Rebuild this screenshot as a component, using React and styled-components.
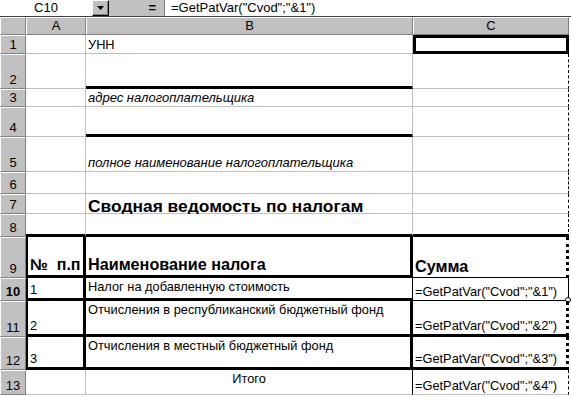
import React from "react";
import styled, { createGlobalStyle } from "styled-components";

const GRID = "1px solid #c0c0c0";
const THICK = "3px solid #000";
const LEFT_THICK = "2px solid #000";
const THIN = "1px solid #000";
const DOTTED = "3px dotted #000";
const PAGE_BREAK = "1px dashed #000";

const GlobalStyle = createGlobalStyle`
  html, body {
    margin: 0;
    padding: 0;
    background: #fff;
  }
  body {
    font-family: "Liberation Sans", Arial, sans-serif;
    font-size: 12px;
    color: #000;
  }
`;

const rowHeights = [19, 35, 18, 30, 35, 22, 20, 23, 41, 23, 36, 33, 25];

const rows = [
  { label: "1", b: { text: "УНН" }, c: { top: THICK, left: THICK, bottom: THICK, right: THICK } },
  { label: "2", b: { bottom: THICK } },
  { label: "3", b: { text: "адрес налогоплательщика", italic: true, size: 13 } },
  { label: "4", b: { bottom: THICK } },
  { label: "5", b: { text: "полное наименование налогоплательщика", italic: true, size: 13 } },
  { label: "6" },
  { label: "7", b: { text: "Сводная ведомость по налогам", bold: true, size: 17.4, lh: "11px" } },
  { label: "8", a: { bottom: THICK }, b: { bottom: THICK }, c: { bottom: THICK } },
  {
    label: "9",
    a: { text: "№  п.п", bold: true, size: 16, left: LEFT_THICK, right: THICK, bottom: THICK },
    b: { text: "Наименование налога", bold: true, size: 16.2, right: THICK, bottom: THICK },
    c: { text: "Сумма", bold: true, size: 16.2, right: DOTTED, bottom: THIN },
  },
  {
    label: "10",
    active: true,
    a: { text: "1", left: LEFT_THICK, right: THICK, bottom: THICK },
    b: { text: "Налог на добавленную стоимость", v: "top", right: THIN, bottom: THICK },
    c: { text: '=GetPatVar("Cvod";"&1")', right: THIN, bottom: THIN, handle: true },
  },
  {
    label: "11",
    a: { text: "2", left: LEFT_THICK, right: THICK, bottom: THICK },
    b: { text: "Отчисления в республиканский бюджетный фонд", v: "top", right: THICK, bottom: THICK },
    c: { text: '=GetPatVar("Cvod";"&2")', right: DOTTED, bottom: THICK },
  },
  {
    label: "12",
    a: { text: "3", left: LEFT_THICK, right: THICK, bottom: THICK },
    b: { text: "Отчисления в местный бюджетный фонд", v: "top", right: THICK, bottom: THICK },
    c: { text: '=GetPatVar("Cvod";"&3")', right: DOTTED, bottom: THICK },
  },
  {
    label: "13",
    b: { text: "Итого", v: "top", h: "center", right: THIN },
    c: { text: '=GetPatVar("Cvod";"&4")' },
  },
];

export default function App() {
  return (
    <>
      <GlobalStyle />
      <Window>
        <FormulaBar>
          <NameBox>C10</NameBox>
          <DropButton>
            <svg width="7" height="4" viewBox="0 0 7 4">
              <path d="M0 0h7L3.5 4z" fill="#000" />
            </svg>
          </DropButton>
          <EqualsZone>=</EqualsZone>
          <FormulaInput>=GetPatVar("Cvod";"&amp;1")</FormulaInput>
        </FormulaBar>
        <Sheet $rows={rowHeights}>
          <HeadCell />
          <HeadCell>A</HeadCell>
          <HeadCell>B</HeadCell>
          <HeadCell>C</HeadCell>
          <Blank />
          {rows.map((row) => (
            <React.Fragment key={row.label}>
              <HeadCell $rowLabel $active={row.active}>
                {row.label}
              </HeadCell>
              {["a", "b", "c"].map((col) => {
                const cell = row[col] || {};
                return (
                  <Cell
                    key={col}
                    $top={cell.top}
                    $left={cell.left}
                    $bottom={cell.bottom}
                    $right={cell.right || (col === "c" ? PAGE_BREAK : undefined)}
                    $v={cell.v}
                    $h={cell.h}
                    $bold={cell.bold}
                    $italic={cell.italic}
                    $size={cell.size}
                    $lh={cell.lh}
                  >
                    {cell.text}
                    {cell.handle && <FillHandle />}
                  </Cell>
                );
              })}
              <Blank />
            </React.Fragment>
          ))}
        </Sheet>
      </Window>
    </>
  );
}

const Window = styled.div`
  width: 571px;
  height: 397px;
  overflow: hidden;
  background: #fff;
`;

const FormulaBar = styled.div`
  display: flex;
  height: 17px;
  box-sizing: border-box;
  background: #c0c0c0;
  border-bottom: 1px solid #404040;
  font-size: 13px;
  line-height: 16px;
`;

const NameBox = styled.div`
  width: 92px;
  background: #fff;
  text-align: center;
`;

const DropButton = styled.div`
  width: 17px;
  box-sizing: border-box;
  border: 1px solid;
  border-color: #fff #000 #000 #fff;
  box-shadow: inset -1px -1px 0 #808080;
  display: flex;
  align-items: center;
  justify-content: center;
`;

const EqualsZone = styled.div`
  width: 56px;
  box-sizing: border-box;
  padding-right: 8px;
  text-align: right;
  font-weight: bold;
  border-right: 1px solid #808080;
`;

const FormulaInput = styled.div`
  flex: 1;
  background: #fff;
  padding-left: 6px;
  white-space: nowrap;
`;

const Sheet = styled.div`
  display: grid;
  grid-template-columns: 26px 60px 327px 156px 2px;
  grid-template-rows: 18px ${(p) => p.$rows.map((h) => `${h}px`).join(" ")};
`;

const HeadCell = styled.div`
  box-sizing: border-box;
  background: #c0c0c0;
  border-top: 1px solid #fff;
  border-left: 1px solid #fff;
  border-right: 1px solid #808080;
  border-bottom: 1px solid #808080;
  display: flex;
  justify-content: center;
  align-items: ${(p) => (p.$rowLabel ? "flex-end" : "center")};
  padding-bottom: ${(p) => (p.$rowLabel ? "1px" : "0")};
  font-size: 13px;
  font-weight: ${(p) => (p.$active ? "bold" : "normal")};
  line-height: 14px;
`;

const Blank = styled.div`
  background: #fff;
`;

const Cell = styled.div`
  position: relative;
  box-sizing: border-box;
  background: #fff;
  border-top: ${(p) => p.$top || "none"};
  border-left: ${(p) => p.$left || "none"};
  border-right: ${(p) => p.$right || GRID};
  border-bottom: ${(p) => p.$bottom || GRID};
  display: flex;
  align-items: ${(p) => (p.$v === "top" ? "flex-start" : "flex-end")};
  justify-content: ${(p) => (p.$h === "center" ? "center" : "flex-start")};
  padding: ${(p) => (p.$v === "top" ? "2px 2px 0" : "0 2px 1px")};
  font-size: ${(p) => p.$size || 12.8}px;
  font-weight: ${(p) => (p.$bold ? "bold" : "normal")};
  font-style: ${(p) => (p.$italic ? "italic" : "normal")};
  line-height: ${(p) => p.$lh || 1.1};
  white-space: pre;
`;

const FillHandle = styled.span`
  position: absolute;
  right: -3px;
  bottom: -3px;
  width: 4px;
  height: 4px;
  border: 1px solid #000;
  border-radius: 50%;
  background: #fff;
`;
